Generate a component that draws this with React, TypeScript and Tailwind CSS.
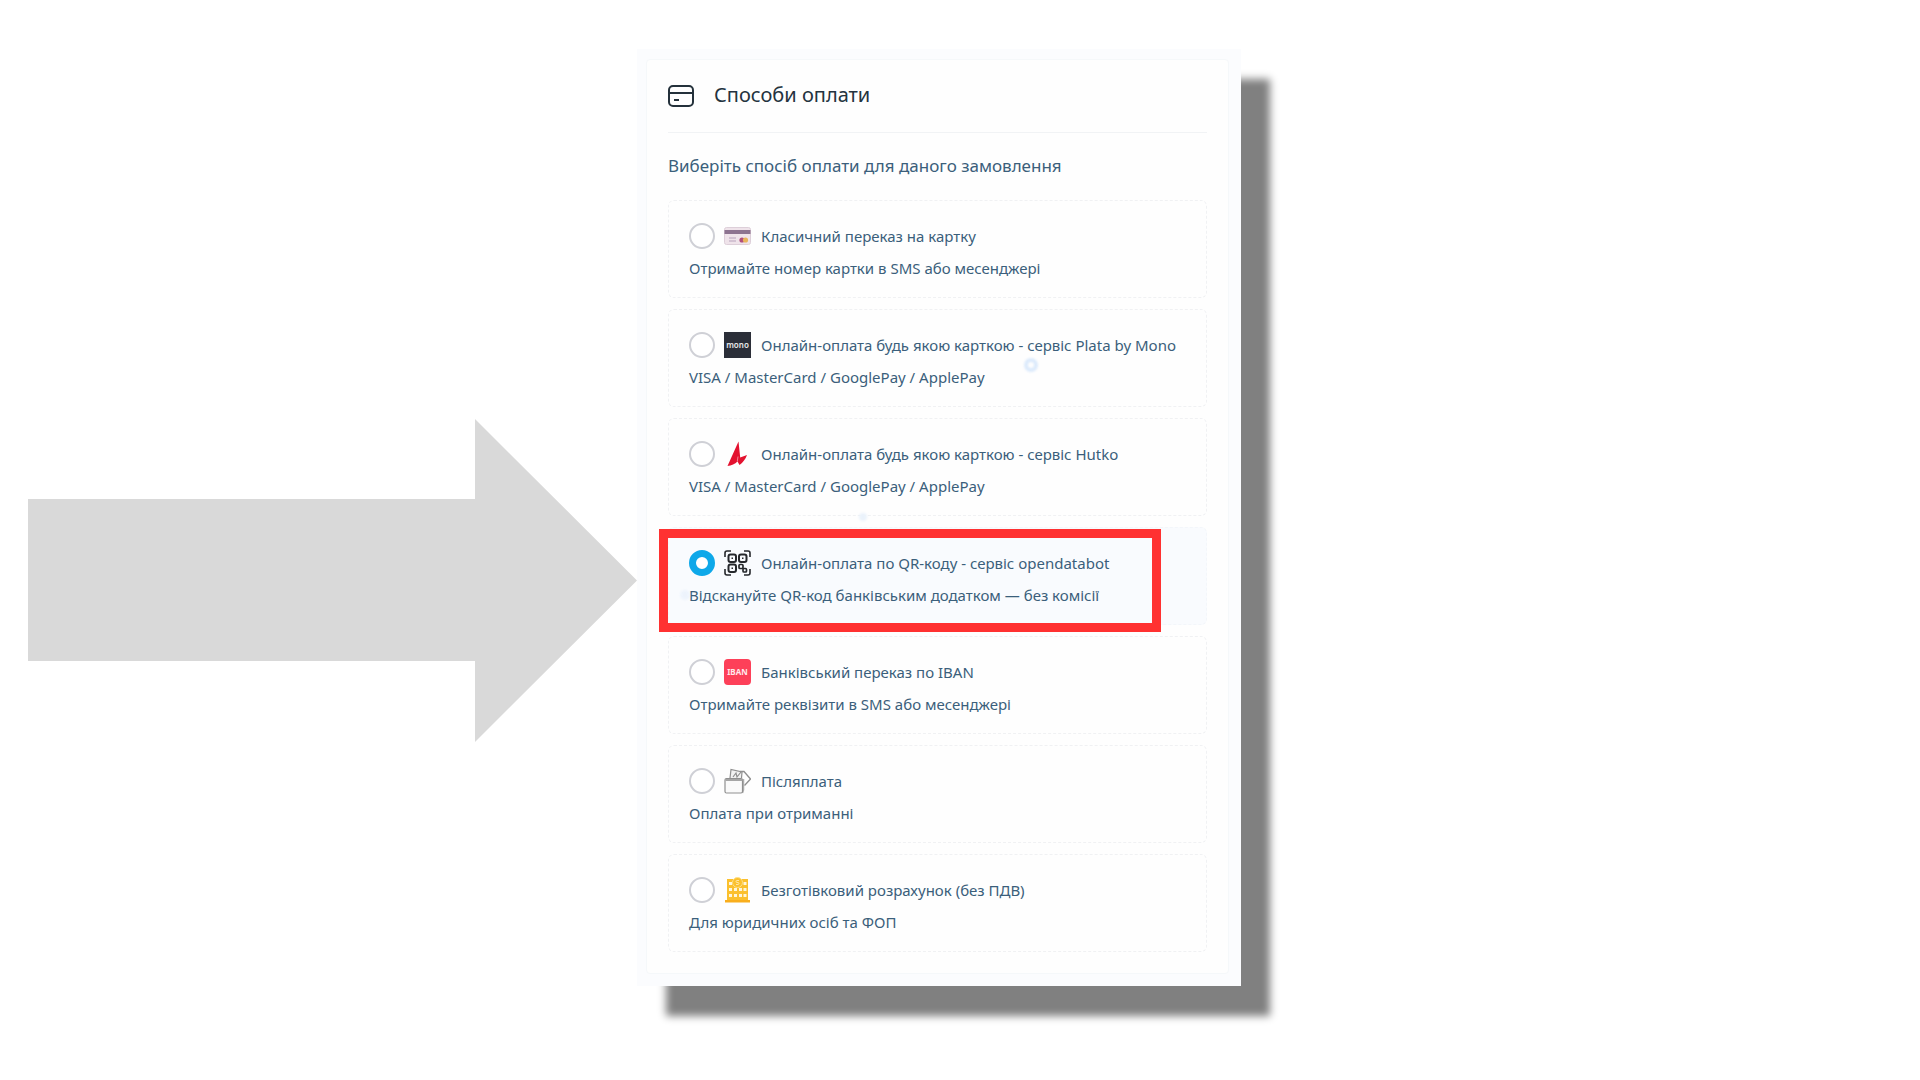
import { useState, type ReactNode } from "react";

function CardIcon() {
  return (
    <svg viewBox="0 0 27 26" className="w-[27px] h-[26px]" aria-hidden="true">
      <rect x="0.5" y="4.5" width="26" height="17" rx="2" fill="#efe3ea" stroke="#ddcfd9" />
      <rect x="0.5" y="7" width="26" height="4" fill="#8d7390" />
      <path d="M5 15h7M5 18h7" stroke="#b7a3bb" strokeWidth="1.2" />
      <circle cx="18" cy="17" r="2.6" fill="#b04f7c" />
      <circle cx="21.5" cy="17" r="2.6" fill="#e9b45c" />
    </svg>
  );
}

function MonoIcon() {
  return (
    <span className="flex items-center justify-center w-[27px] h-[26px] bg-[#2b2e38] text-[#e8e8ea] text-[8px] leading-none font-semibold">
      mono
    </span>
  );
}

function HutkoIcon() {
  return (
    <svg viewBox="0 0 27 26" className="w-[27px] h-[26px]" aria-hidden="true">
      <path d="M14.500 0.500 L16.200 16.500 L23 14 C21.500 18 19 21.500 15.500 24 L13.500 20.500 C11 23 7.500 24.500 3.500 25 Z" fill="#e3122f" />
      <path d="M13.300 20.500 L14 15.500" stroke="#f6a3ae" strokeWidth="0.8" />
    </svg>
  );
}

function QrIcon() {
  return (
    <svg viewBox="0 0 27 26" className="w-[27px] h-[26px]" fill="none" stroke="#26282c" strokeWidth="2" aria-hidden="true">
      <path d="M1 7V3q0-2 2-2h4M20 1h4q2 0 2 2v4M26 19v4q0 2-2 2h-4M7 25H3q-2 0-2-2v-4" strokeWidth="1.6" />
      <rect x="4.500" y="4.500" width="7.500" height="7.500" rx="2" />
      <rect x="15" y="4.500" width="7.500" height="7.500" rx="2" />
      <rect x="4.500" y="14.500" width="7.500" height="7.500" rx="2" />
      <path d="M7.500 8.200h1.500M18 8.200h1.500M7.500 18.200h1.500" strokeWidth="1.5" />
      <rect x="15" y="14.500" width="4" height="4" rx="1" strokeWidth="1.7" />
      <rect x="19" y="18.500" width="3.500" height="3.500" rx="1" strokeWidth="1.7" />
    </svg>
  );
}

function IbanIcon() {
  return (
    <span className="flex items-center justify-center w-[27px] h-[26px] rounded bg-[#fd4059] text-[#ffe9ec] text-[8px] leading-none font-bold">
      IBAN
    </span>
  );
}

function WalletIcon() {
  return (
    <svg viewBox="0 0 27 26" className="w-[27px] h-[26px]" fill="none" stroke="#8f8f8f" aria-hidden="true">
      <path d="M16 3.500 L20 3.500 L26.500 11 L20.500 17.500" strokeWidth="1.3" />
      <path d="M6 10 L7 1.500 L18 4 L17.500 10" fill="#f1f1f1" strokeWidth="1.2" />
      <path d="M9 9 L12 5 L13 9 L17 4" strokeWidth="1.2" />
      <path d="M19.500 11 V22 L18.500 25" stroke="#b0b0b0" strokeWidth="1.500" />
      <rect x="1" y="10.500" width="17.500" height="14.500" rx="1.500" fill="#fafafa" strokeWidth="1.200" />
      <path d="M1.500 12h17" strokeWidth="2" stroke="#a5a5a5" />
    </svg>
  );
}

function BankIcon() {
  return (
    <svg viewBox="0 0 27 26" className="w-[27px] h-[26px]" aria-hidden="true">
      <path d="M3 2h21v21H3z" fill="#fbc02d" />
      <path d="M1 23h25v2.500H1z" fill="#f9ae1c" />
      <path
        d="M5 5h3v3H5zM19.500 5h3v3h-3zM5 11h3v3H5zM10 11h3v3h-3zM15 11h3v3h-3zM19.500 11h3v3h-3zM5 17h3v3H5zM10 17h3v3h-3zM15 17h3v3h-3zM19.500 17h3v3h-3z"
        fill="#fff6da"
      />
      <circle cx="13.500" cy="5.500" r="5" fill="#fbc02d" stroke="#fde08a" />
      <path d="M15 3.500h-2q-1 0-1 1t1 1h1q1 0 1 1t-1 1h-2" fill="none" stroke="#fde9ae" strokeWidth="0.900" />
    </svg>
  );
}

function HeaderCardIcon() {
  return (
    <svg viewBox="0 0 26 22" className="w-[26px] h-[22px]" fill="none" stroke="#24313b" strokeWidth="2" aria-hidden="true">
      <rect x="1" y="1" width="24" height="20" rx="4" />
      <path d="M1 8h24M6 15h5" />
    </svg>
  );
}

interface PaymentMethod {
  id: string;
  title: string;
  description: string;
  icon: ReactNode;
}

const methods: PaymentMethod[] = [
  {
    id: "card",
    title: "Класичний переказ на картку",
    description: "Отримайте номер картки в SMS або месенджері",
    icon: <CardIcon />,
  },
  {
    id: "mono",
    title: "Онлайн-оплата будь якою карткою - сервіс Plata by Mono",
    description: "VISA / MasterCard / GooglePay / ApplePay",
    icon: <MonoIcon />,
  },
  {
    id: "hutko",
    title: "Онлайн-оплата будь якою карткою - сервіс Hutko",
    description: "VISA / MasterCard / GooglePay / ApplePay",
    icon: <HutkoIcon />,
  },
  {
    id: "qr",
    title: "Онлайн-оплата по QR-коду - сервіс opendatabot",
    description: "Відскануйте QR-код банківським додатком — без комісії",
    icon: <QrIcon />,
  },
  {
    id: "iban",
    title: "Банківський переказ по IBAN",
    description: "Отримайте реквізити в SMS або месенджері",
    icon: <IbanIcon />,
  },
  {
    id: "cod",
    title: "Післяплата",
    description: "Оплата при отриманні",
    icon: <WalletIcon />,
  },
  {
    id: "invoice",
    title: "Безготівковий розрахунок (без ПДВ)",
    description: "Для юридичних осіб та ФОП",
    icon: <BankIcon />,
  },
];

export default function App() {
  const [selected, setSelected] = useState("qr");

  return (
    <main className="min-h-screen bg-white grid grid-cols-[637fr_604fr_679fr] items-start font-['Noto_Sans',sans-serif] text-[#3b5f7b]">
      {/* Pointer to the highlighted method */}
      <div className="pl-7 pt-[419px]">
        <svg viewBox="0 0 609 323" className="block w-full" aria-hidden="true">
          <path d="M0 80H447V0L609 161.500L447 323V242H0Z" fill="#d9d9d9" />
        </svg>
      </div>

      <section className="relative mt-[49px] pt-[10px] pr-3 pb-3 pl-[9px] bg-[#fbfcfe] shadow-[29px_30px_8px_0_#808080]">
        <form className="rounded border border-[#f5f8fa] bg-[#fefefe] px-[21px] pb-[21px]">
          <header className="flex items-center gap-5 h-[73px] border-b border-[#f1f3f5]">
            <HeaderCardIcon />
            <h1 className="text-xl leading-6 pb-0.5 text-[#24333f]">Способи оплати</h1>
          </header>

          <fieldset>
            <legend className="pt-[21px] pb-[22px] text-[17px] leading-6">Виберіть спосіб оплати для даного замовлення</legend>

            <div className="flex flex-col gap-[11px]">
              {methods.map((method) => (
                <label
                  key={method.id}
                  className={`relative block rounded-md border border-dashed px-5 pt-[22px] pb-[18px] ${
                    selected === method.id ? "bg-[#f9fbfe] border-[#f3f6fa]" : "border-[#f0f1f3]"
                  }`}
                >
                  <span className="flex items-center h-[26px]">
                    <input
                      type="radio"
                      name="payment"
                      value={method.id}
                      checked={selected === method.id}
                      onChange={() => setSelected(method.id)}
                      className="appearance-none shrink-0 size-[26px] rounded-full bg-white border-2 border-[#cfd0d6] checked:border-[7px] checked:border-[#0ea8e9]"
                    />
                    <span className="shrink-0 ml-[9px] mr-[10px]">{method.icon}</span>
                    <span className="text-[15px] leading-5 whitespace-nowrap">{method.title}</span>
                  </span>
                  <span className="block mt-2 text-[15px] leading-[22px] whitespace-nowrap">{method.description}</span>
                  {method.id === "qr" && (
                    <span className="absolute top-[1px] -left-[10px] w-[502px] h-[103px] border-[9px] border-[#ff3131] pointer-events-none" />
                  )}
                </label>
              ))}
            </div>
          </fieldset>
        </form>

        {/* Snowflakes */}
        <span className="absolute top-[309px] left-[387px] size-[14px] rounded-full border-4 border-[#d3e5fb] opacity-80 blur-[1px] pointer-events-none" />
        <span className="absolute top-[464px] left-[222px] size-2 rounded-full bg-[#eaf2fb] blur-[1px] pointer-events-none" />
        <span className="absolute top-[541px] left-[43px] size-[10px] rounded-full bg-[#e6effc] opacity-60 blur-[1px] pointer-events-none" />
      </section>
    </main>
  );
}
